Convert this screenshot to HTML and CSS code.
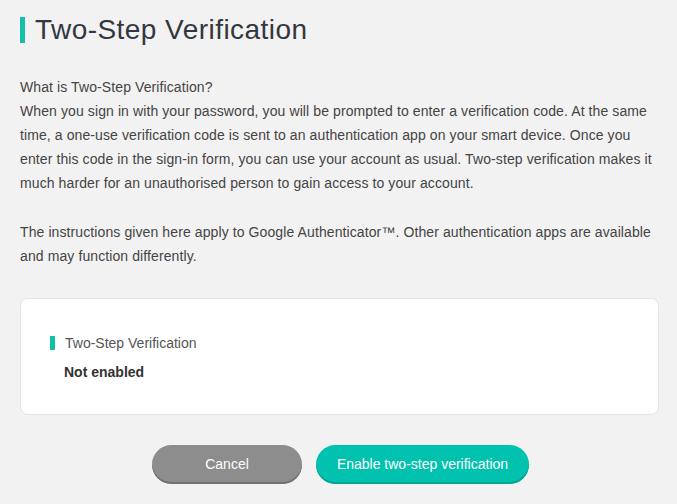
FILE: index.html
```html
<!DOCTYPE html>
<html lang="en">
<head>
<meta charset="utf-8">
<title>Two-Step Verification</title>
<link rel="stylesheet" href="styles.css">
</head>
<body>
<main class="page">
  <header class="title-row">
    <span class="title-bar"></span>
    <h1 class="title">Two-Step Verification</h1>
  </header>
  <p class="intro">What is Two-Step Verification?<br>When you sign in with your password, you will be prompted to enter a verification code. At the same time, a one-use verification code is sent to an authentication app on your smart device. Once you enter this code in the sign-in form, you can use your account as usual. Two-step verification makes it much harder for an unauthorised person to gain access to your account.</p>
  <p class="intro">The instructions given here apply to Google Authenticator™. Other authentication apps are available and may function differently.</p>
  <section class="card">
    <div class="card-label"><span class="label-bar"></span><span>Two-Step Verification</span></div>
    <div class="card-status">Not enabled</div>
  </section>
  <div class="actions">
    <button class="btn btn-cancel" type="button">Cancel</button>
    <button class="btn btn-primary" type="button">Enable two-step verification</button>
  </div>
</main>
</body>
</html>
```
FILE: styles.css
```css
html, body {
  margin: 0;
  padding: 0;
  background: #f2f2f2;
}
body {
  font-family: "Liberation Sans", Arial, sans-serif;
  color: #444;
}
.page {
  padding: 17px 18px 0 20px;
}
.title-row {
  display: flex;
  align-items: center;
  height: 26px;
}
.title-bar {
  width: 5px;
  height: 26px;
  background: #12bfa8;
  margin-right: 10px;
}
.title {
  margin: 0;
  font-size: 28px;
  font-weight: normal;
  line-height: 26px;
  letter-spacing: 0.45px;
  color: #333740;
}
.intro {
  margin: 0;
  font-size: 14px;
  line-height: 24px;
  letter-spacing: 0.1px;
  color: #444;
}
.title-row + .intro {
  margin-top: 32px;
}
.intro + .intro {
  margin-top: 25px;
}
.card {
  margin-top: 30px;
  background: #fff;
  border: 1px solid #e4e4e4;
  border-radius: 8px;
  padding: 34px 29px 32px;
}
.card-label {
  display: flex;
  align-items: center;
  font-size: 14px;
  line-height: 20px;
  color: #555;
}
.label-bar {
  width: 5px;
  height: 14px;
  background: #12bfa8;
  margin-right: 10px;
}
.card-status {
  margin-top: 9px;
  padding-left: 14px;
  font-size: 14px;
  line-height: 20px;
  font-weight: bold;
  color: #333;
}
.actions {
  margin-top: 30px;
  display: flex;
  justify-content: center;
  gap: 14px;
  padding-left: 2px;
}
.btn {
  height: 39px;
  border: none;
  border-radius: 20px;
  font-family: "Liberation Sans", Arial, sans-serif;
  font-size: 14px;
  color: #fff;
  padding: 0 0 2px;
  cursor: pointer;
}
.btn-cancel {
  width: 150px;
  background: #8d8d8d;
  box-shadow: inset 0 -2px 0 #727272;
}
.btn-primary {
  width: 213px;
  background: #00c2ae;
  box-shadow: inset 0 -2px 0 #00a493;
}
```
